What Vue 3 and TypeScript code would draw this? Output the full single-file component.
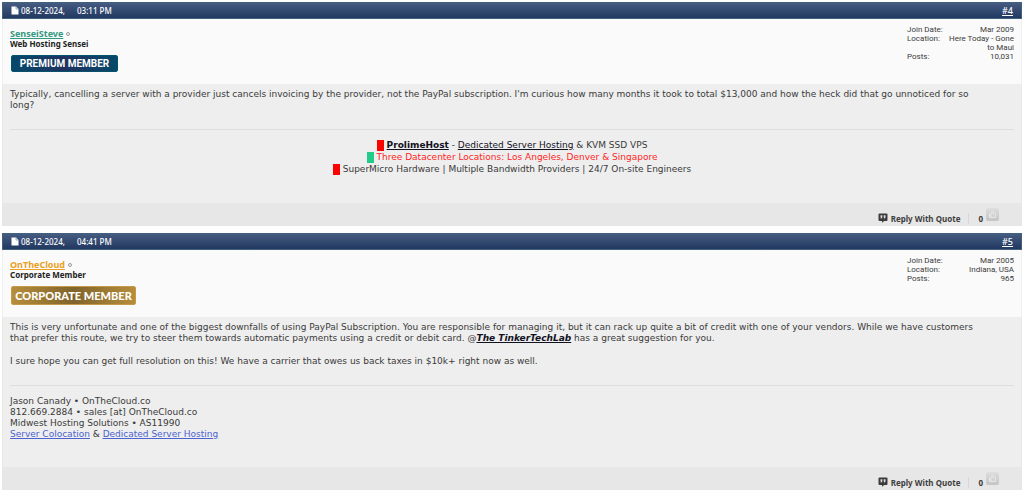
<script setup lang="ts">
interface Post {
  id: number
  date: string
  time: string
  user: string
  rank: string
  badge: string
  tone: 'premium' | 'corporate'
  joined: string
  location: string[]
  posts: string
}

const posts: Post[] = [
  {
    id: 4, date: '08-12-2024,', time: '03:11 PM', user: 'SenseiSteve', rank: 'Web Hosting Sensei',
    badge: 'PREMIUM MEMBER', tone: 'premium', joined: 'Mar 2009', location: ['Here Today - Gone', 'to Maui'], posts: '10,031',
  },
  {
    id: 5, date: '08-12-2024,', time: '04:41 PM', user: 'OnTheCloud', rank: 'Corporate Member',
    badge: 'CORPORATE MEMBER', tone: 'corporate', joined: 'Mar 2005', location: ['Indiana, USA'], posts: '965',
  },
]
</script>

<template>
  <main class="thread">
    <article v-for="post in posts" :key="post.id" class="post" :class="post.tone">
      <header class="bar">
        <svg class="page-icon" viewBox="0 0 8 9" aria-hidden="true">
          <path d="M0.5 0.5H5L7.5 3V8.5H0.5Z" fill="#fff" />
          <path d="M5 0.5V3H7.5" fill="none" stroke="#8290aa" stroke-width="0.7" />
        </svg>
        <span class="date">{{ post.date }}</span>
        <span>{{ post.time }}</span>
        <a class="number" href="#">#{{ post.id }}</a>
      </header>

      <section class="user">
        <div class="identity">
          <div class="name-row">
            <a class="name" href="#">{{ post.user }}</a>
            <span class="status"></span>
          </div>
          <div class="rank">{{ post.rank }}</div>
          <div class="badge">{{ post.badge }}</div>
        </div>
        <dl class="stats">
          <dt>Join Date:</dt><dd>{{ post.joined }}</dd>
          <dt>Location:</dt>
          <dd><div v-for="line in post.location" :key="line">{{ line }}</div></dd>
          <dt>Posts:</dt><dd>{{ post.posts }}</dd>
        </dl>
      </section>

      <section class="body">
        <template v-if="post.id === 4">
          <p>Typically, cancelling a server with a provider just cancels invoicing by the provider, not the PayPal subscription. I'm curious how many months it took to total $13,000 and how the heck did that go unnoticed for so<br>long?</p>
          <div class="signature centered">
            <div><i class="block red"></i><a class="strong dark" href="#">ProlimeHost</a> - <a class="dark" href="#">Dedicated Server Hosting</a> &amp; KVM SSD VPS</div>
            <div class="alert"><i class="block green"></i>Three Datacenter Locations: Los Angeles, Denver &amp; Singapore</div>
            <div><i class="block red"></i>SuperMicro Hardware | Multiple Bandwidth Providers | 24/7 On-site Engineers</div>
          </div>
        </template>
        <template v-else>
          <p>This is very unfortunate and one of the biggest downfalls of using PayPal Subscription. You are responsible for managing it, but it can rack up quite a bit of credit with one of your vendors. While we have customers<br>that prefer this route, we try to steer them towards automatic payments using a credit or debit card. @<a class="strong dark mention" href="#">The TinkerTechLab</a> has a great suggestion for you.</p>
          <p>I sure hope you can get full resolution on this! We have a carrier that owes us back taxes in $10k+ right now as well.</p>
          <div class="signature">
            <div>Jason Canady • OnTheCloud.co</div>
            <div>812.669.2884 • sales [at] OnTheCloud.co</div>
            <div>Midwest Hosting Solutions • AS11990</div>
            <div><a class="blue" href="#">Server Colocation</a> &amp; <a class="blue" href="#">Dedicated Server Hosting</a></div>
          </div>
        </template>
      </section>

      <footer class="actions">
        <a class="reply" href="#">
          <svg viewBox="0 0 10 10" aria-hidden="true">
            <path d="M1.5 0.5H8.5Q9.5 0.5 9.5 1.5V7Q9.5 8 8.5 8H6.2L4 9.8V8H1.5Q0.5 8 0.5 7V1.5Q0.5 0.5 1.5 0.5Z" fill="#3c3c3c" />
            <path d="M2.5 2.2H4.3V4.4L3.3 5.6H2.5L3 4.4H2.5ZM5.7 2.2H7.5V4.4L6.5 5.6H5.7L6.2 4.4H5.7Z" fill="#ddd" />
          </svg>
          <span>Reply With Quote</span>
        </a>
        <span class="count">0</span>
        <button class="like" type="button" aria-label="Like">
          <svg viewBox="0 0 13 13" aria-hidden="true">
            <path d="M3.5 6H5L6.3 3.2Q7.5 3 7.3 4.5L7 5.6H9.5V9.5H3.5ZM5 6V9.5" fill="#d3d3d3" stroke="#eee" stroke-width="0.7" />
          </svg>
        </button>
      </footer>
    </article>
  </main>
</template>

<style>
body {
  margin: 0;
  background: #fff;
}
</style>

<style scoped>
.thread {
  display: flex;
  flex-direction: column;
  gap: 7px;
  padding: 2px 2px 1px;
  font-family: "DejaVu Sans", Verdana, sans-serif;
  font-size: 9px;
  line-height: 11px;
  color: #3a3a3a;
}
.bar, .user, .actions {
  font-family: "Noto Sans", Tahoma, sans-serif;
  font-size: 8px;
}
.bar {
  display: flex;
  align-items: center;
  box-sizing: border-box;
  height: 17px;
  padding: 0 8px;
  border: 1px solid #41617f;
  background: linear-gradient(#455b80, #213861);
  color: #fff;
  font-weight: 500;
}
.page-icon {
  width: 8px;
  height: 9px;
  margin-right: 2px;
}
.date {
  width: 56px;
}
.number {
  margin-left: auto;
  color: #fff;
  font-size: 9px;
}
.user {
  display: flex;
  justify-content: space-between;
  box-sizing: border-box;
  min-height: 65px;
  padding: 6px 7px 10px;
  border: 1px solid #f0f0f0;
  border-width: 0 1px;
  background: #fafafa;
}
.corporate .user {
  min-height: 67px;
}
.identity {
  padding-top: 3px;
}
.name-row {
  display: flex;
  align-items: center;
  height: 11px;
}
.name {
  font-size: 9px;
  font-weight: bold;
}
.premium .name {
  color: #339980;
}
.corporate .name {
  color: #e9a024;
}
.status {
  box-sizing: border-box;
  width: 4px;
  height: 4px;
  margin-left: 3px;
  border: 1px solid #999;
  border-radius: 50%;
}
.rank {
  font-weight: bold;
  line-height: 10px;
  color: #222;
}
.badge {
  display: flex;
  align-items: center;
  justify-content: center;
  box-sizing: border-box;
  margin: 6px 0 0 1px;
  border-radius: 2px;
  color: #fff;
  white-space: nowrap;
}
.premium .badge {
  width: 107px;
  height: 17px;
  border: 1px solid #07516d;
  background: linear-gradient(90deg, #06496a, #203260 50%, #06496a);
  font-family: Roboto, sans-serif;
  font-size: 10px;
  font-weight: 700;
}
.corporate .badge {
  width: 125px;
  height: 19px;
  border: 1px solid #c39a47;
  background: linear-gradient(90deg, #b78d3c, #80642b 50%, #b78d3c);
  font-family: Lato, sans-serif;
  font-size: 11px;
  font-weight: 900;
}
.stats {
  display: grid;
  grid-template-columns: 37px 70px;
  align-content: start;
  margin: 0;
  font-family: Roboto, Tahoma, sans-serif;
  line-height: 9px;
}
.stats dd {
  margin: 0;
  text-align: right;
  white-space: nowrap;
}
.body {
  box-sizing: border-box;
  min-height: 119px;
  padding: 5px 7px 0;
  border: 1px solid #e9e9e9;
  border-width: 0 1px;
  background: #eee;
}
.corporate .body {
  min-height: 150px;
}
.body p {
  margin: 0 0 12px;
}
.signature {
  margin-top: 18px;
  padding-top: 10px;
  border-top: 1px solid #ddd;
}
.centered {
  padding-top: 9px;
  line-height: 12px;
  text-align: center;
}
.block {
  display: inline-block;
  width: 7px;
  height: 11px;
  margin-right: 3px;
  vertical-align: middle;
}
.red {
  background: #f00;
}
.green {
  background: #2c8;
}
.alert {
  color: #ff2525;
}
.strong {
  font-weight: bold;
}
.dark {
  color: #11111f;
}
.mention {
  font-style: italic;
}
.blue {
  color: #4b62cf;
}
.actions {
  display: flex;
  align-items: center;
  justify-content: flex-end;
  box-sizing: border-box;
  height: 23px;
  padding: 0 23px 0 0;
  background: #e7e7e7;
  font-weight: bold;
}
.reply {
  display: flex;
  align-items: center;
  gap: 3px;
  margin-top: 7px;
  padding-right: 8px;
  border-right: 1px solid #d8d8d8;
  color: #3e3e3e;
  text-decoration: none;
}
.reply svg {
  width: 10px;
  height: 10px;
}
.count {
  margin: 7px 3px 0 9px;
}
.like {
  width: 13px;
  height: 13px;
  padding: 0;
  border: 0;
  border-radius: 2px;
  background: linear-gradient(#dedede, #c4c4c4);
}
.like svg {
  display: block;
}
</style>
